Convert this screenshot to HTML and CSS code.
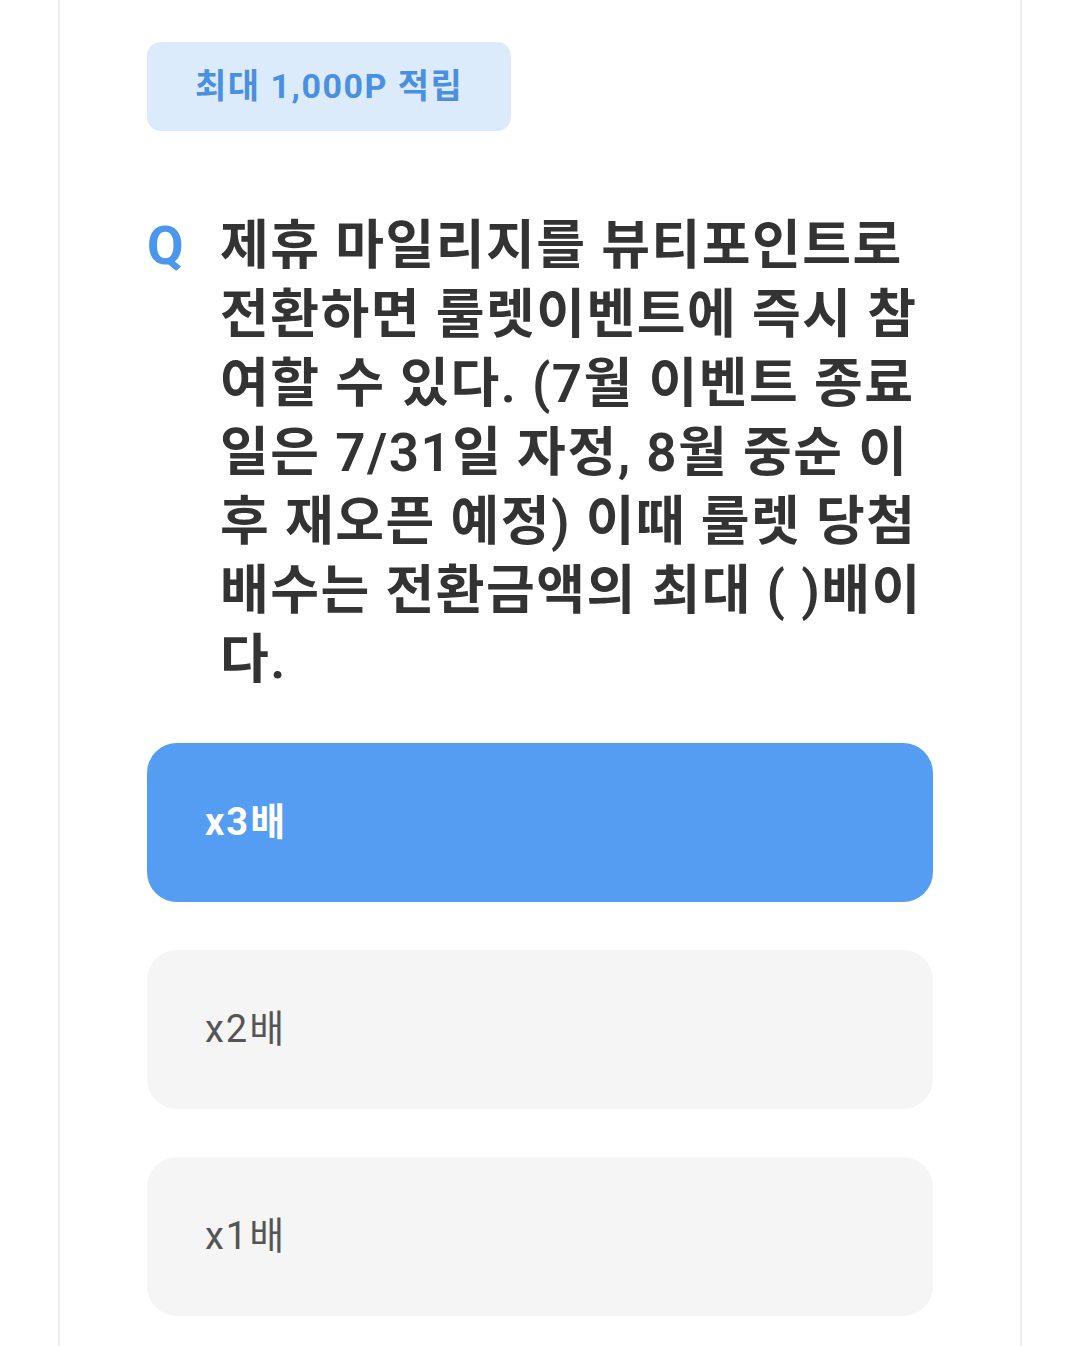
FILE: index.html
```html
<!DOCTYPE html>
<html lang="ko">
<head>
    <meta charset="UTF-8">
    <meta name="viewport" content="width=device-width, initial-scale=1.0">
    <title>퀴즈</title>
    <link rel="stylesheet" href="styles.css">
</head>
<body>
    <main class="quiz-card">
        <div class="reward-badge">최대 1,000P 적립</div>

        <div class="question">
            <span class="question-mark">Q</span>
            <p class="question-text">제휴 마일리지를 뷰티포인트로 전환하면 룰렛이벤트에 즉시 참여할 수 있다. (7월 이벤트 종료일은 7/31일 자정, 8월 중순 이후 재오픈 예정) 이때 룰렛 당첨 배수는 전환금액의 최대 ( )배이다.</p>
        </div>

        <ul class="answers">
            <li class="answer selected">x3배</li>
            <li class="answer">x2배</li>
            <li class="answer">x1배</li>
        </ul>
    </main>
</body>
</html>
```

FILE: styles.css
```css
* {
    box-sizing: border-box;
}

body {
    margin: 0;
    background-color: #fff;
    font-family: "Roboto", "Noto Sans CJK KR", sans-serif;
}

.quiz-card {
    margin: 0 58px;
    min-height: 1346px;
    border-left: 2px solid #eeeeee;
    border-right: 2px solid #eeeeee;
    padding: 42px 87px 0 87px;
}

.reward-badge {
    display: inline-block;
    height: 89px;
    line-height: 89px;
    padding: 0 48px;
    border-radius: 14px;
    background-color: #dcebfc;
    color: #4a8fe0;
    font-size: 34px;
    font-weight: bold;
    letter-spacing: 1.5px;
}

.question {
    display: flex;
    margin-top: 81px;
}

.question-mark {
    flex: 0 0 73px;
    color: #4b97ee;
    font-size: 53px;
    font-weight: bold;
    line-height: 69px;
}

.question-text {
    margin: 0 -12px 0 0;
    color: #333;
    font-size: 53px;
    font-weight: 600;
    line-height: 69px;
    letter-spacing: 1.5px;
}

.answers {
    list-style-type: none;
    margin: 48px 0 0 0;
    padding: 0;
}

.answer {
    height: 159px;
    line-height: 159px;
    padding-left: 58px;
    margin-bottom: 48px;
    border-radius: 30px;
    background-color: #f5f5f5;
    color: #555;
    font-size: 38px;
    letter-spacing: 2px;
}

.answer.selected {
    background-color: #559df3;
    color: #fff;
    font-weight: bold;
}
```
